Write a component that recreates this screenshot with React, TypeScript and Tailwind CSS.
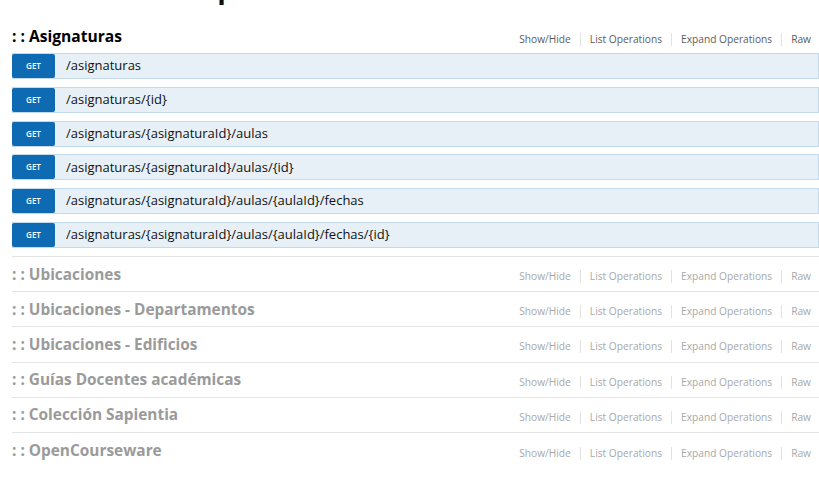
import React from "react";

const rows = [
  "/asignaturas",
  "/asignaturas/{id}",
  "/asignaturas/{asignaturaId}/aulas",
  "/asignaturas/{asignaturaId}/aulas/{id}",
  "/asignaturas/{asignaturaId}/aulas/{aulaId}/fechas",
  "/asignaturas/{asignaturaId}/aulas/{aulaId}/fechas/{id}",
];

const collapsed = [
  "Ubicaciones",
  "Ubicaciones - Departamentos",
  "Ubicaciones - Edificios",
  "Guías Docentes académicas",
  "Colección Sapientia",
  "OpenCourseware",
];

function Links({ muted }: { muted: boolean }) {
  const items = ["Show/Hide", "List Operations", "Expand Operations", "Raw"];
  return (
    <ul className={`flex items-center text-[10.2px] pt-[5px] ${muted ? "text-[#a8a8a8]" : "text-[#5c5c5c]"}`}>
      {items.map((t, i) => (
        <li
          key={t}
          className={`px-[9px] leading-[13px] ${i < items.length - 1 ? "border-r border-[#e2e2e2]" : "pr-[8px]"}`}
        >
          {t}
        </li>
      ))}
    </ul>
  );
}

export default function App() {
  return (
    <div
      className="w-[819px] h-[481px] bg-white overflow-hidden"
      style={{ fontFamily: '"Open Sans", "Noto Sans", sans-serif' }}
    >
      <div className="h-[5px] overflow-hidden">
        <div className="pl-[195px] -mt-[27.5px] text-[28px] leading-[28px] font-bold text-[#111]">Operaciones</div>
      </div>
      <div className="pl-3 mt-[15px]">
        <section>
          <div className="flex items-center justify-between h-[33px]">
            <h2 className="text-[15.6px] font-bold text-black">: : Asignaturas</h2>
            <Links muted={false} />
          </div>
          <div className="flex flex-col gap-[7.8px]">
            {rows.map((r) => (
              <div key={r} className="flex items-center h-[26px] bg-[#e7f0f7] border border-[#c3d9ec]">
                <span className="ml-[-1px] w-[43px] h-[24px] flex items-center justify-center bg-[#0f6ab4] text-white text-[8px] font-semibold rounded-[2px]">
                  GET
                </span>
                <span className="ml-[11px] text-[13px] text-[#111]">{r}</span>
              </div>
            ))}
          </div>
          <div className="h-[9px] border-b border-[#e4e4e4]" />
        </section>
        {collapsed.map((c, i) => (
          <section
            key={c}
            className={`flex items-center justify-between h-[35.2px] ${i < collapsed.length - 1 ? "border-b border-[#e4e4e4]" : ""}`}
          >
            <h2 className="text-[15.4px] font-bold text-[#9a9a9a]">: : {c}</h2>
            <Links muted />
          </section>
        ))}
      </div>
    </div>
  );
}
